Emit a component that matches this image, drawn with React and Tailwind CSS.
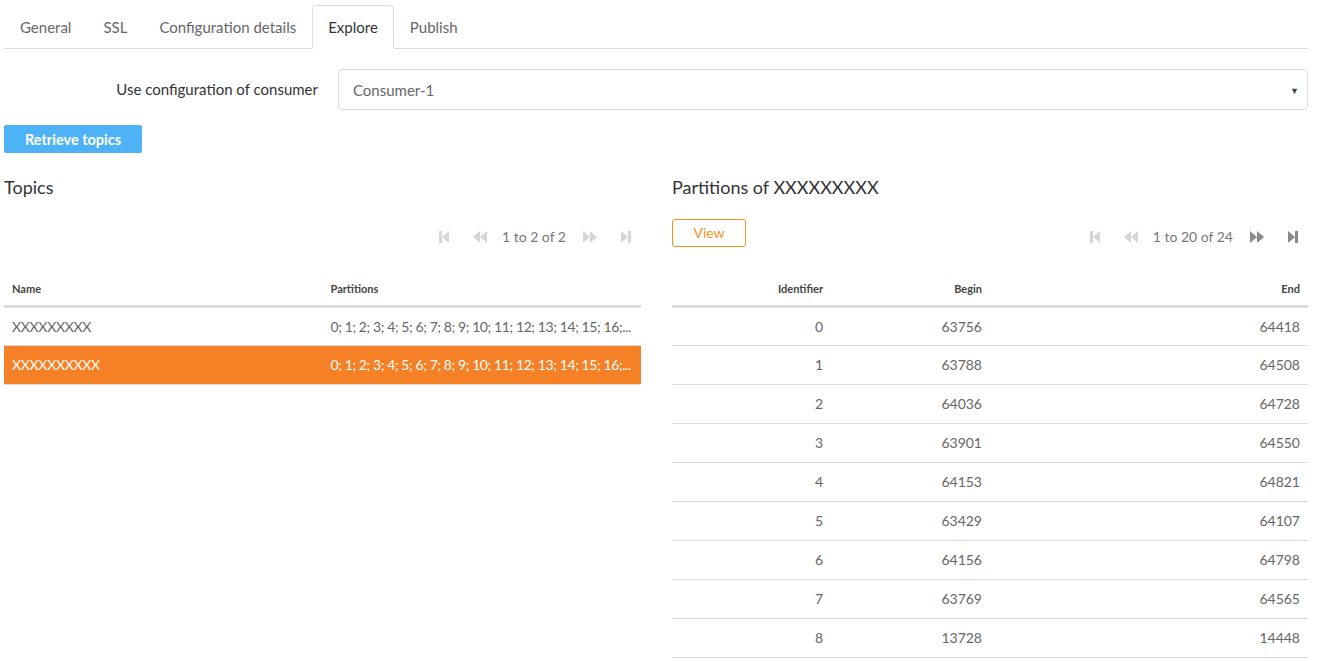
import React, { useState } from 'react';

const tabs = ['General', 'SSL', 'Configuration details', 'Explore', 'Publish'];

const topics = [
  { name: 'XXXXXXXXX', partitions: '0; 1; 2; 3; 4; 5; 6; 7; 8; 9; 10; 11; 12; 13; 14; 15; 16;...' },
  { name: 'XXXXXXXXXX', partitions: '0; 1; 2; 3; 4; 5; 6; 7; 8; 9; 10; 11; 12; 13; 14; 15; 16;...' },
];

const partitions = [
  [0, 63756, 64418],
  [1, 63788, 64508],
  [2, 64036, 64728],
  [3, 63901, 64550],
  [4, 64153, 64821],
  [5, 63429, 64107],
  [6, 64156, 64798],
  [7, 63769, 64565],
  [8, 13728, 14448],
];

function PagerIcon({ kind, active }) {
  const fill = active ? '#8a8a8a' : '#d6d6d6';
  return (
    <svg width="14" height="16" viewBox="0 0 14 16" className="shrink-0">
      {kind === 'first' && (
        <>
          <rect x="2" y="2" width="3" height="12" fill={fill} />
          <path d="M12 2 L5 8 L12 14 Z" fill={fill} />
        </>
      )}
      {kind === 'prev' && (
        <>
          <path d="M7 2 L0 8 L7 14 Z" fill={fill} />
          <path d="M14 2 L7 8 L14 14 Z" fill={fill} />
        </>
      )}
      {kind === 'next' && (
        <>
          <path d="M0 2 L7 8 L0 14 Z" fill={fill} />
          <path d="M7 2 L14 8 L7 14 Z" fill={fill} />
        </>
      )}
      {kind === 'last' && (
        <>
          <path d="M2 2 L9 8 L2 14 Z" fill={fill} />
          <rect x="9" y="2" width="3" height="12" fill={fill} />
        </>
      )}
    </svg>
  );
}

function Pager({ label, canForward }) {
  return (
    <div className="flex items-center text-[14px] text-[#777]">
      <PagerIcon kind="first" />
      <span className="w-[22px]" />
      <PagerIcon kind="prev" />
      <span className="ml-[15px] mr-[17px]">{label}</span>
      <PagerIcon kind="next" active={canForward} />
      <span className="w-[22px]" />
      <PagerIcon kind="last" active={canForward} />
    </div>
  );
}

export default function App() {
  const [selected, setSelected] = useState(1);

  return (
    <div className="min-h-screen bg-white pl-1 pr-[13px] pt-[5px] font-['Lato',sans-serif] text-[#555]">
      <div className="flex border-b border-[#dddddd]">
        {tabs.map((tab) => (
          <div
            key={tab}
            className={`-mb-px flex h-[44px] items-center px-[15px] text-[15px] ${
              tab === 'Explore'
                ? 'rounded-t-[4px] border border-b-white border-[#dddddd] bg-white text-[#333]'
                : 'border border-transparent text-[#666]'
            }`}
          >
            {tab}
          </div>
        ))}
      </div>

      <div className="mt-[20px] flex items-center">
        <label className="w-[314px] text-right text-[15px] text-[#333]">Use configuration of consumer</label>
        <div className="ml-[20px] flex h-[41px] flex-1 items-center justify-between rounded-[4px] border border-[#dddddd] pl-[14px] pr-[8px] pt-[2px] text-[15px] text-[#666]">
          <span>Consumer-1</span>
          <span className="text-[9px] text-[#444]">▼</span>
        </div>
      </div>

      <button className="mt-[15px] h-[28px] w-[138px] rounded-[2px] bg-[#4db3f6] pt-[1px] text-[14.5px] font-bold text-white">
        Retrieve topics
      </button>

      <div className="mt-[22px] flex gap-[31px]">
        <section className="w-[637px]">
          <h2 className="text-[18px] leading-[24px] text-[#333]">Topics</h2>
          <div className="mt-[27px] flex justify-end pr-[8px]">
            <Pager label="1 to 2 of 2" canForward={false} />
          </div>
          <table className="mt-[27px] w-full table-fixed border-collapse">
            <thead>
              <tr className="border-b-[3px] border-[#dddddd]">
                <th className="h-[32px] w-1/2 px-[8px] text-left text-[11px] font-bold text-[#444]">Name</th>
                <th className="h-[32px] px-[8px] text-left text-[11px] font-bold text-[#444]">Partitions</th>
              </tr>
            </thead>
            <tbody>
              {topics.map((t, i) => (
                <tr
                  key={t.name}
                  onClick={() => setSelected(i)}
                  className={`border-b border-[#dddddd] text-[14px] ${
                    selected === i ? 'bg-[#f58025] text-white' : 'text-[#666]'
                  }`}
                >
                  <td className="h-[39px] truncate px-[8px] tracking-[-0.3px]">{t.name}</td>
                  <td className="h-[39px] truncate px-[8px] tracking-[-0.4px]">{t.partitions}</td>
                </tr>
              ))}
            </tbody>
          </table>
        </section>

        <section className="flex-1">
          <h2 className="text-[18px] leading-[24px] text-[#333]">Partitions of XXXXXXXXX</h2>
          <div className="mt-[19px] flex items-center justify-between pr-[8px]">
            <button className="h-[28px] w-[74px] rounded-[3px] border border-[#f0931e] text-[14px] text-[#f0931e]">
              View
            </button>
            <div className="mt-[8px]">
              <Pager label="1 to 20 of 24" canForward />
            </div>
          </div>
          <table className="mt-[27px] w-full table-fixed border-collapse">
            <thead>
              <tr className="border-b-[3px] border-[#dddddd]">
                <th className="h-[32px] w-1/4 px-[8px] text-right text-[11px] font-bold text-[#444]">Identifier</th>
                <th className="h-[32px] w-1/4 px-[8px] text-right text-[11px] font-bold text-[#444]">Begin</th>
                <th className="h-[32px] px-[8px] text-right text-[11px] font-bold text-[#444]">End</th>
              </tr>
            </thead>
            <tbody>
              {partitions.map(([id, begin, end]) => (
                <tr key={id} className="border-b border-[#dddddd] text-[14px] text-[#666]">
                  <td className="h-[39px] px-[8px] text-right">{id}</td>
                  <td className="h-[39px] px-[8px] text-right">{begin}</td>
                  <td className="h-[39px] px-[8px] text-right">{end}</td>
                </tr>
              ))}
            </tbody>
          </table>
        </section>
      </div>
    </div>
  );
}
